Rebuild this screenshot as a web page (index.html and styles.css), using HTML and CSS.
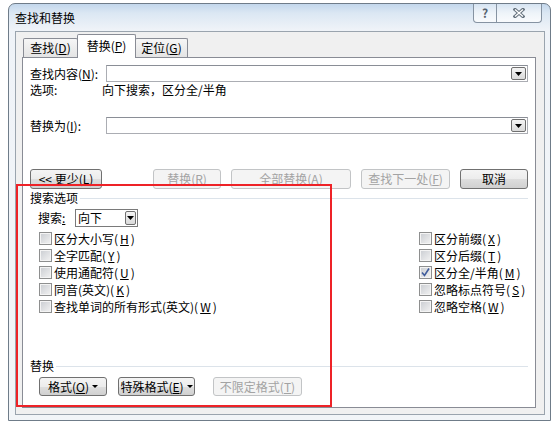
FILE: index.html
```html
<!DOCTYPE html>
<html lang="zh-CN">
<head>
  <meta charset="UTF-8">
  <meta name="viewport" content="width=device-width, initial-scale=1.0">
  <title>查找和替换</title>
  <link rel="stylesheet" href="styles.css">
</head>
<body>
  <div class="dialog">
    <div class="dialog__title">
      <span class="dialog__caption">查找和替换</span>
      <div class="dialog__controls">
        <div class="dialog__btn dialog__btn--help">?</div>
        <div class="dialog__btn dialog__btn--close">
          <svg width="12" height="10" viewBox="0 0 12 10">
            <path d="M2 1.5 L10 8.5 M10 1.5 L2 8.5" stroke="#66737f" stroke-width="3.4" stroke-linecap="square"/>
            <path d="M2 1.5 L10 8.5 M10 1.5 L2 8.5" stroke="#fff" stroke-width="1.3"/>
          </svg>
        </div>
      </div>
    </div>

    <div class="dialog__client">
      <!-- вкладки -->
      <div class="tabs">
        <div class="tab tab--find">查找(<u>D</u>)</div>
        <div class="tab tab--replace">替换(<u>P</u>)</div>
        <div class="tab tab--goto">定位(<u>G</u>)</div>
      </div>

      <div class="panel">
        <div class="field field--find">
          <span class="field__label">查找内容(<u>N</u>):</span>
          <div class="combo">
            <div class="combo__btn">
              <svg width="7" height="4" viewBox="0 0 7 4"><polygon points="0,0 7,0 3.5,4" fill="#000"/></svg>
            </div>
          </div>
        </div>
        <div class="summary">
          <span class="summary__label">选项:</span>
          <span>向下搜索，区分全/半角</span>
        </div>
        <div class="field field--replace">
          <span class="field__label">替换为(<u>I</u>):</span>
          <div class="combo">
            <div class="combo__btn">
              <svg width="7" height="4" viewBox="0 0 7 4"><polygon points="0,0 7,0 3.5,4" fill="#000"/></svg>
            </div>
          </div>
        </div>

        <div class="actions">
          <div class="btn btn--less">&lt;&lt; 更少(<u>L</u>)</div>
          <div class="btn btn--disabled btn--replace">替换(<u>R</u>)</div>
          <div class="btn btn--disabled btn--all">全部替换(<u>A</u>)</div>
          <div class="btn btn--disabled btn--next">查找下一处(<u>F</u>)</div>
          <div class="btn btn--cancel">取消</div>
        </div>

        <!-- Параметры поиска -->
        <div class="group__head">搜索选项</div>
        <div class="search">
          <span class="search__label">搜索<u>:</u></span>
          <div class="select">
            <span class="select__text">向下</span>
            <div class="combo__btn combo__btn--small">
              <svg width="7" height="4" viewBox="0 0 7 4"><polygon points="0,0 7,0 3.5,4" fill="#000"/></svg>
            </div>
          </div>
        </div>

        <div class="options">
          <div class="options__col options__col--left">
            <div class="check"><span class="check__box"></span>区分大小写(<u>H</u>)</div>
            <div class="check"><span class="check__box"></span>全字匹配(<u>Y</u>)</div>
            <div class="check"><span class="check__box"></span>使用通配符(<u>U</u>)</div>
            <div class="check"><span class="check__box"></span>同音(英文)(<u>K</u>)</div>
            <div class="check"><span class="check__box"></span>查找单词的所有形式(英文)(<u>W</u>)</div>
          </div>
          <div class="options__col">
            <div class="check"><span class="check__box"></span>区分前缀(<u>X</u>)</div>
            <div class="check"><span class="check__box"></span>区分后缀(<u>T</u>)</div>
            <div class="check">
              <span class="check__box">
                <svg width="11" height="11" viewBox="0 0 11 11"><path d="M2 5.5 L4.5 8.5 L9 1.5" fill="none" stroke="#3f5c9c" stroke-width="1.6"/></svg>
              </span>区分全/半角(<u>M</u>)
            </div>
            <div class="check"><span class="check__box"></span>忽略标点符号(<u>S</u>)</div>
            <div class="check"><span class="check__box"></span>忽略空格(<u>W</u>)</div>
          </div>
        </div>

        <div class="group group--bottom">
          <div class="group__head group__head--bottom">替换</div>
          <div class="format">
            <div class="btn btn--small btn--format">格式(<u>O</u>) <span class="btn__arrow"></span></div>
            <div class="btn btn--small btn--special">特殊格式(<u>E</u>)<span class="btn__arrow"></span></div>
            <div class="btn btn--small btn--disabled btn--nofmt">不限定格式(<u>T</u>)</div>
          </div>
        </div>
      </div>
    </div>
  </div>

  <!-- красная рамка поверх -->
  <div class="mark"></div>
</body>
</html>
```

FILE: styles.css
```css
* {
  box-sizing: border-box;
  font-family: "Noto Sans CJK SC", "DejaVu Sans", sans-serif;
}
body {
  margin: 0;
  width: 558px;
  height: 426px;
  position: relative;
  overflow: hidden;
  background: #fff;
  font-size: 12px;
  color: #000;
}
u {
  text-decoration: underline;
}

/* окно */
.dialog {
  width: 543px;
  height: 418px;
  margin: 3px 0 0 8px;
  padding: 0 5px 5px 6px;
  display: flex;
  flex-direction: column;
  border: 1px solid #6f7c89;
  border-radius: 7px 7px 0 0;
  background: linear-gradient(180deg, #c3d7ec 0, #dbe7f3 9px, #eff3f8 26px, #f2f5f8 100%);
}
.dialog__title {
  height: 27px;
  display: flex;
  justify-content: space-between;
  align-items: flex-start;
}
.dialog__caption {
  line-height: 27px;
}
.dialog__controls {
  display: flex;
  margin-right: 3px;
}
.dialog__btn {
  height: 19px;
  display: flex;
  align-items: center;
  justify-content: center;
  border: 1px solid #8693a2;
  border-top: none;
  background: linear-gradient(180deg, rgba(255, 255, 255, .3), rgba(255, 255, 255, .75));
}
.dialog__btn--help {
  width: 24px;
  border-radius: 0 0 0 4px;
  font-weight: 700;
  color: #56636f;
  line-height: 1;
}
.dialog__btn--close {
  width: 46px;
  margin-left: -1px;
  border-radius: 0 0 4px 0;
}
.dialog__client {
  flex: 1;
  display: flex;
  flex-direction: column;
  padding: 0 8px 6px 6px;
  border: 1px solid #9aa4ae;
  background: #f0f0f0;
}

/* вкладки */
.tabs {
  height: 25px;
  display: flex;
  align-items: flex-end;
  padding-left: 1px;
}
.tab {
  height: 19px;
  display: flex;
  align-items: center;
  justify-content: center;
  border: 1px solid #898c95;
  border-bottom: none;
  border-radius: 2px 2px 0 0;
  background: linear-gradient(180deg, #f6f6f6, #e4e4e4);
  line-height: 12px;
}
.tab--find {
  width: 55px;
}
.tab--replace {
  width: 59px;
  height: 24px;
  margin: 0 -1px -1px -1px;
  padding-bottom: 1px;
  background: #fff;
  position: relative;
  z-index: 1;
}
.tab--goto {
  width: 53px;
}

.panel {
  flex: 1;
  display: flex;
  flex-direction: column;
  padding: 0 7px 11px 7px;
  border: 1px solid #898c95;
  background: #fff;
}

/* поля ввода */
.field {
  height: 17px;
  display: flex;
  align-items: center;
}
.field--find {
  margin-top: 7px;
}
.field--replace {
  margin-top: 21px;
}
.field__label {
  width: 76px;
  line-height: 12px;
}
.combo {
  flex: 1;
  height: 17px;
  display: flex;
  justify-content: flex-end;
  padding: 1px;
  border: 1px solid #abadb3;
  border-top-color: #8a8e96;
  background: #fff;
}
.combo__btn {
  width: 15px;
  height: 100%;
  display: flex;
  align-items: center;
  justify-content: center;
  border: 1px solid #707070;
  border-radius: 2px;
  background: linear-gradient(180deg, #f4f4f4, #dadada);
}
.combo__btn--small {
  width: 11px;
}
.summary {
  display: flex;
  margin-top: 2px;
  line-height: 12px;
}
.summary__label {
  width: 72px;
}

/* кнопки */
.actions {
  display: flex;
  gap: 10px;
  margin-top: 35px;
}
.btn {
  height: 20px;
  display: flex;
  align-items: center;
  justify-content: center;
  border: 1px solid #707070;
  border-radius: 3px;
  background: linear-gradient(180deg, #f4f4f4 0, #ececec 50%, #dedede 51%, #d0d0d0 100%);
  line-height: 12px;
  white-space: nowrap;
}
.btn--disabled {
  border-color: #c2c4c6;
  background: #f4f4f4;
  color: #a3a3a3;
}
.btn--less {
  width: 72px;
}
.btn--replace {
  width: 68px;
  margin-left: auto;
}
.btn--all {
  width: 120px;
}
.btn--next {
  width: 89px;
}
.btn--cancel {
  width: 68px;
}
.btn--small {
  height: 19px;
}
.btn__arrow {
  width: 0;
  height: 0;
  margin-left: 3px;
  border-left: 3px solid transparent;
  border-right: 3px solid transparent;
  border-top: 3px solid #000;
}

/* группы */
.group__head {
  display: flex;
  align-items: center;
  gap: 2px;
  margin-top: 3px;
  line-height: 12px;
}
.group__head::after {
  content: "";
  flex: 1;
  height: 1px;
  background: #dce3ea;
}
.group__head--bottom {
  margin-top: 0;
}
.group--bottom {
  margin-top: auto;
}

.search {
  display: flex;
  align-items: center;
  margin-top: 5px;
  padding-left: 8px;
}
.search__label {
  width: 37px;
  line-height: 12px;
}
.select {
  width: 63px;
  height: 18px;
  display: flex;
  align-items: center;
  padding: 1px 1px 1px 2px;
  border: 1px solid #7a7a7a;
  background: #fff;
}
.select__text {
  flex: 1;
  line-height: 12px;
}

/* флажки */
.options {
  display: flex;
  margin-top: 3px;
  padding-left: 9px;
}
.options__col {
  display: flex;
  flex-direction: column;
}
.options__col--left {
  width: 380px;
}
.check {
  height: 17px;
  display: flex;
  align-items: center;
  gap: 2px;
  line-height: 12px;
  white-space: nowrap;
}
.check__box {
  width: 13px;
  height: 13px;
  display: flex;
  align-items: center;
  justify-content: center;
  border: 1px solid #8e8f8f;
  box-shadow: inset 0 0 0 1px #f4f4f4;
  background: linear-gradient(135deg, #c9ccd1, #f3f3f3);
}

.format {
  display: flex;
  margin-top: 5px;
  padding-left: 9px;
}
.btn--format {
  width: 68px;
}
.btn--special {
  width: 77px;
  margin-left: 11px;
}
.btn--nofmt {
  width: 89px;
  margin-left: 18px;
}

/* красная рамка */
.mark {
  position: absolute;
  left: 16px;
  top: 184px;
  width: 316px;
  height: 223px;
  border: 2px solid #ee2227;
}
```
